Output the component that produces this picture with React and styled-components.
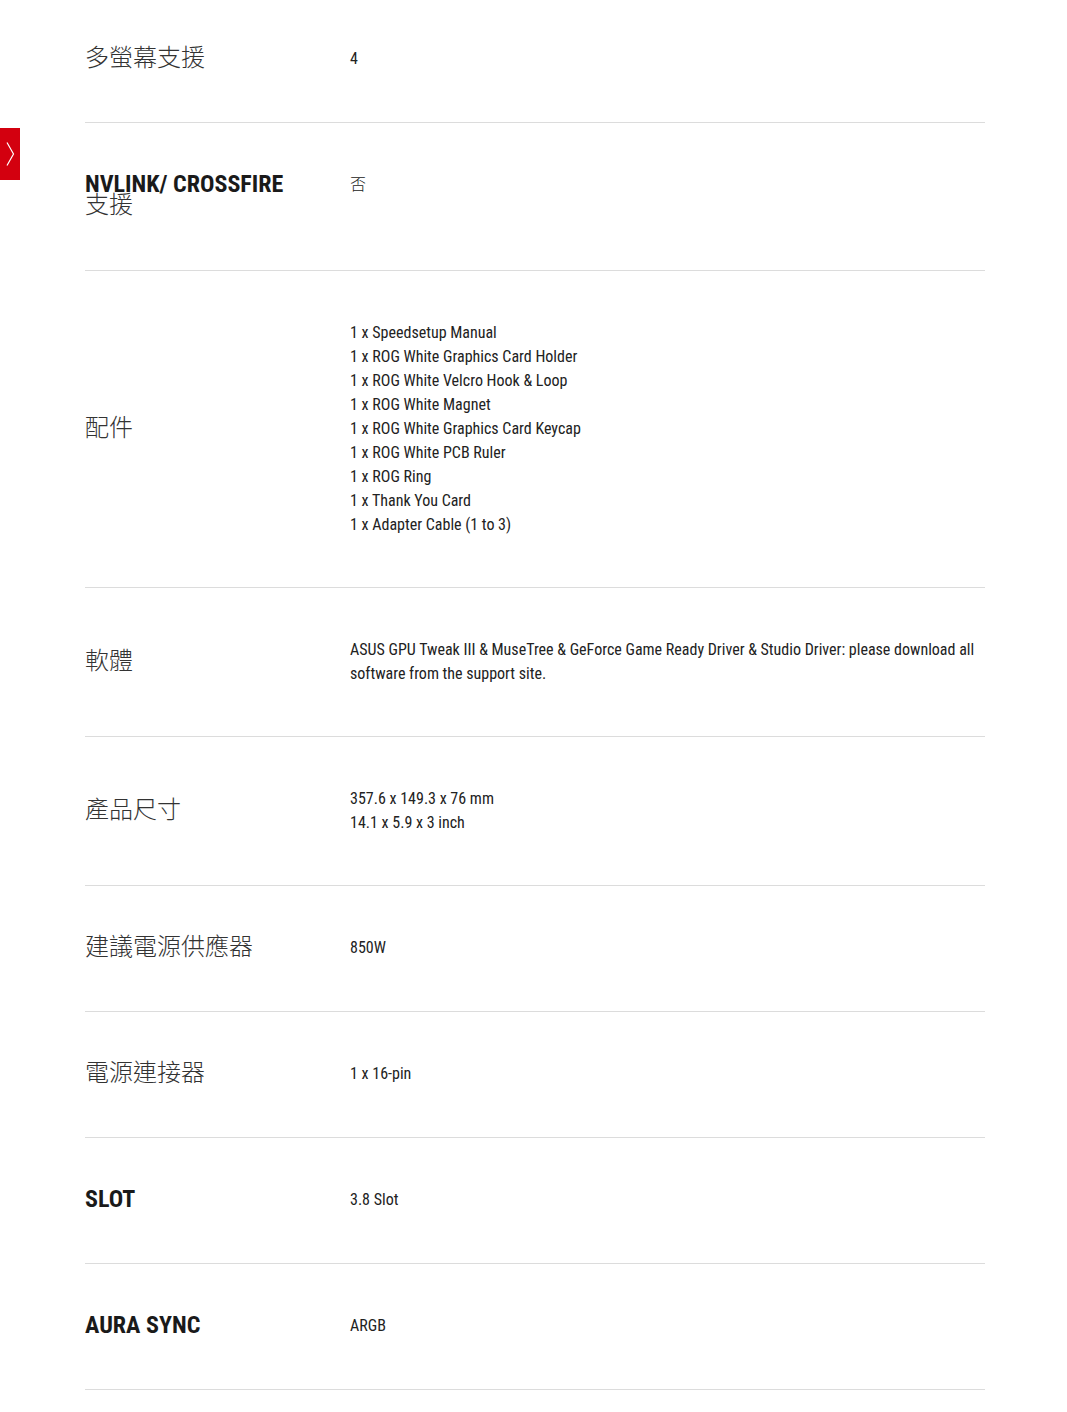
import React from 'react'
import styled, { createGlobalStyle } from 'styled-components'

const GlobalStyle = createGlobalStyle`
  html, body {
    margin: 0;
    padding: 0;
    background: #fff;
  }
  body {
    font-family: "Roboto Condensed", "Liberation Sans Narrow", "DejaVu Sans Condensed", "Noto Sans CJK TC", sans-serif;
    font-stretch: condensed;
    color: #222;
  }
`

const SideTab = styled.button`
  position: fixed;
  left: 0;
  top: 128px;
  width: 20px;
  height: 52px;
  padding: 0;
  border: 0;
  background: #d3000f;
  display: flex;
  align-items: center;
  justify-content: center;
  cursor: pointer;

  svg {
    width: 10px;
    height: 24px;
  }
`

const SpecList = styled.dl`
  margin: 0 82px 0 85px;
  padding: 0;
`

const Row = styled.div`
  display: flex;
  padding: 50px 0;
  border-bottom: 1px solid #dcdcdc;

  &:first-child {
    padding-top: 47px;
  }
`

const Label = styled.dt`
  flex: 0 0 265px;
  align-self: center;
  margin: ${props => (props.latin ? '0' : '-3px 0 3px')};
  min-height: 25px;
  font-size: 24px;
  line-height: 23.5px;
  color: ${props => (props.latin ? '#1a1a1a' : '#333')};
  font-weight: ${props => (props.latin ? 700 : 300)};
  font-family: ${props =>
    props.latin
      ? '"Roboto Condensed", "Liberation Sans Narrow", "DejaVu Sans Condensed", "Noto Sans CJK TC", sans-serif'
      : '"Noto Sans CJK TC", sans-serif'};
  text-transform: uppercase;

  span {
    display: block;
  }

  .cjk {
    margin-top: -6px;
    padding-bottom: 6px;
    font-family: "Noto Sans CJK TC", sans-serif;
    font-weight: 300;
    color: #333;
  }
`

const Value = styled.dd`
  flex: 1;
  margin: 0;
  font-size: 16px;
  line-height: 24px;
  color: #222;

  .cjk {
    margin-top: -2px;
    font-family: "Noto Sans CJK TC", sans-serif;
    font-weight: 300;
  }
`

const Line = styled.div``

const specs = [
  { label: '多螢幕支援', value: ['4'] },
  { label: 'NVLINK/ CROSSFIRE', labelCjk: '支援', latin: true, value: ['否'], valueCjk: true },
  {
    label: '配件',
    value: [
      '1 x Speedsetup Manual',
      '1 x ROG White Graphics Card Holder',
      '1 x ROG White Velcro Hook & Loop',
      '1 x ROG White Magnet',
      '1 x ROG White Graphics Card Keycap',
      '1 x ROG White PCB Ruler',
      '1 x ROG Ring',
      '1 x Thank You Card',
      '1 x Adapter Cable (1 to 3)',
    ],
  },
  {
    label: '軟體',
    value: [
      'ASUS GPU Tweak III & MuseTree & GeForce Game Ready Driver & Studio Driver: please download all software from the support site.',
    ],
  },
  { label: '產品尺寸', value: ['357.6 x 149.3 x 76 mm', '14.1 x 5.9 x 3 inch'] },
  { label: '建議電源供應器', value: ['850W'] },
  { label: '電源連接器', value: ['1 x 16-pin'] },
  { label: 'SLOT', latin: true, value: ['3.8 Slot'] },
  { label: 'AURA SYNC', latin: true, value: ['ARGB'] },
]

export default function App() {
  return (
    <>
      <GlobalStyle />
      <SideTab aria-label="open menu">
        <svg viewBox="0 0 10 24" fill="none" stroke="#fff" strokeWidth="1.2">
          <path d="M2 0.5 L8.5 12 L2 23.5" />
        </svg>
      </SideTab>
      <SpecList>
        {specs.map(spec => (
          <Row key={spec.label}>
            <Label latin={spec.latin}>
              <span>{spec.label}</span>
              {spec.labelCjk && <span className="cjk">{spec.labelCjk}</span>}
            </Label>
            <Value>
              {spec.value.map(line => (
                <Line key={line} className={spec.valueCjk ? 'cjk' : undefined}>
                  {line}
                </Line>
              ))}
            </Value>
          </Row>
        ))}
      </SpecList>
    </>
  )
}
